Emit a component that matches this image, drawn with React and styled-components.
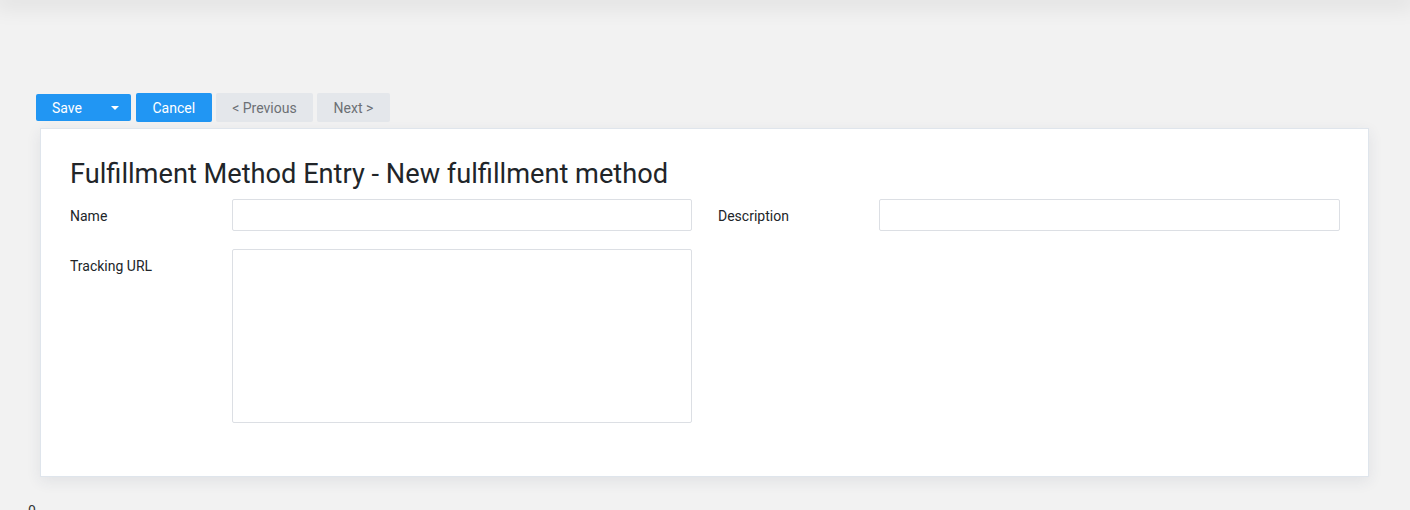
import React from "react";
import styled, { createGlobalStyle } from "styled-components";

const GlobalStyle = createGlobalStyle`
  html, body {
    margin: 0;
    padding: 0;
    background: #f2f2f2;
    font-family: Roboto, "Liberation Sans", sans-serif;
    font-size: 14px;
    color: #212529;
  }
`;

const Page = styled.div`
  height: 510px;
  display: flex;
  flex-direction: column;
  overflow: hidden;

  & > * {
    flex-shrink: 0;
  }
`;

const TopShade = styled.div`
  height: 1px;
  margin-top: -1px;
  box-shadow: 0 0 22px 6px rgba(0, 0, 0, 0.1);
`;

const Toolbar = styled.div`
  display: flex;
  align-items: center;
  gap: 4px;
  padding: 93px 0 0 36px;
  height: 29px;
`;

const SplitGroup = styled.div`
  display: flex;
  height: 27px;
  margin-right: 1px;
`;

const Button = styled.button`
  font-family: inherit;
  font-size: 14px;
  border: none;
  border-radius: 2px;
  height: ${(p) => (p.$short ? "27px" : "29px")};
  padding: 0 16.5px;
  cursor: pointer;
  background: ${(p) => (p.$primary ? "#2196f3" : "#e4e7eb")};
  color: ${(p) => (p.$primary ? "#ffffff" : "#6c7075")};
  display: flex;
  align-items: center;
`;

const SaveMain = styled(Button)`
  border-radius: 2px 0 0 2px;
  width: 62px;
  padding-left: 16px;
`;

const SaveCaret = styled(Button)`
  border-radius: 0 2px 2px 0;
  width: 33px;
  justify-content: center;
  padding: 0;
`;

const Caret = styled.span`
  width: 0;
  height: 0;
  border-left: 4px solid transparent;
  border-right: 4px solid transparent;
  border-top: 4px solid #ffffff;
`;

const Card = styled.div`
  margin: 6px 41px 0 40px;
  background: #ffffff;
  border: 1px solid #dfe5ec;
  box-shadow: 0 4px 14px rgba(40, 60, 90, 0.09);
  padding: 27px 28px 53px 29px;
`;

const Title = styled.h1`
  margin: 0 0 7px;
  font-size: 27.2px;
  font-weight: 400;
  color: #212529;
  line-height: 36px;
`;

const Grid = styled.div`
  display: grid;
  grid-template-columns: 622px 622px;
  column-gap: 26px;
  align-items: start;
`;

const Row = styled.div`
  display: flex;
  align-items: ${(p) => (p.$top ? "flex-start" : "center")};
  margin-bottom: ${(p) => (p.$last ? "0" : "18px")};
`;

const Label = styled.label`
  width: ${(p) => p.$w || 162}px;
  flex-shrink: 0;
  color: #212529;
  font-size: 14px;
  padding-top: ${(p) => (p.$top ? "9px" : "2px")};
`;

const Input = styled.input`
  flex: 1;
  height: 32px;
  box-sizing: border-box;
  border: 1px solid #dcdfe4;
  border-radius: 2px;
  font-family: inherit;
  font-size: 14px;
  padding: 0 8px;
  background: #fff;
`;

const TextArea = styled.textarea`
  flex: 1;
  height: 174px;
  box-sizing: border-box;
  border: 1px solid #dcdfe4;
  border-radius: 2px;
  font-family: inherit;
  font-size: 14px;
  padding: 6px 8px;
  resize: none;
`;

const Footer = styled.div`
  padding: 26px 0 0 28px;
  font-size: 14px;
  line-height: 17px;
  color: #333;
`;

export default function App() {
  return (
    <>
      <GlobalStyle />
      <Page>
        <TopShade />
        <Toolbar>
          <SplitGroup>
            <SaveMain $primary $short>Save</SaveMain>
            <SaveCaret $primary $short>
              <Caret />
            </SaveCaret>
          </SplitGroup>
          <Button $primary>Cancel</Button>
          <Button>&lt; Previous</Button>
          <Button>Next &gt;</Button>
        </Toolbar>
        <Card>
          <Title>Fulfillment Method Entry - New fulfillment method</Title>
          <Grid>
            <div>
              <Row>
                <Label>Name</Label>
                <Input />
              </Row>
              <Row $top $last>
                <Label $top>Tracking URL</Label>
                <TextArea />
              </Row>
            </div>
            <div>
              <Row>
                <Label $w={161}>Description</Label>
                <Input />
              </Row>
            </div>
          </Grid>
        </Card>
        <Footer>0</Footer>
      </Page>
    </>
  );
}
